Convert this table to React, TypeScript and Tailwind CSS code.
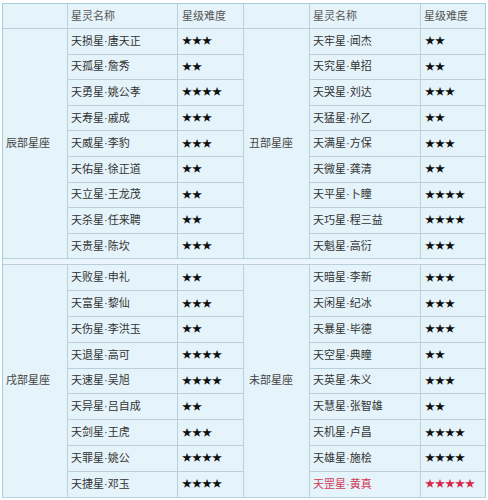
import React from "react";

type Row = { name: string; stars: number; hot?: boolean };
type Group = { zodiac: string; rows: Row[] };

const top: Group[] = [
  {
    zodiac: "辰部星座",
    rows: [
      { name: "天损星·唐天正", stars: 3 },
      { name: "天孤星·詹秀", stars: 2 },
      { name: "天勇星·姚公孝", stars: 4 },
      { name: "天寿星·戚成", stars: 3 },
      { name: "天威星·李豹", stars: 3 },
      { name: "天佑星·徐正道", stars: 2 },
      { name: "天立星·王龙茂", stars: 2 },
      { name: "天杀星·任来聘", stars: 2 },
      { name: "天贵星·陈坎", stars: 3 },
    ],
  },
  {
    zodiac: "丑部星座",
    rows: [
      { name: "天牢星·闻杰", stars: 2 },
      { name: "天究星·单招", stars: 2 },
      { name: "天哭星·刘达", stars: 3 },
      { name: "天猛星·孙乙", stars: 2 },
      { name: "天满星·方保", stars: 3 },
      { name: "天微星·龚清", stars: 2 },
      { name: "天平星·卜瞳", stars: 4 },
      { name: "天巧星·程三益", stars: 4 },
      { name: "天魁星·高衍", stars: 3 },
    ],
  },
];

const bottom: Group[] = [
  {
    zodiac: "戌部星座",
    rows: [
      { name: "天败星·申礼", stars: 2 },
      { name: "天富星·黎仙", stars: 3 },
      { name: "天伤星·李洪玉", stars: 2 },
      { name: "天退星·高可", stars: 4 },
      { name: "天速星·吴旭", stars: 4 },
      { name: "天异星·吕自成", stars: 2 },
      { name: "天剑星·王虎", stars: 3 },
      { name: "天罪星·姚公", stars: 4 },
      { name: "天捷星·邓玉", stars: 4 },
    ],
  },
  {
    zodiac: "未部星座",
    rows: [
      { name: "天暗星·李新", stars: 3 },
      { name: "天闲星·纪冰", stars: 3 },
      { name: "天暴星·毕德", stars: 3 },
      { name: "天空星·典瞳", stars: 2 },
      { name: "天英星·朱义", stars: 3 },
      { name: "天慧星·张智雄", stars: 2 },
      { name: "天机星·卢昌", stars: 4 },
      { name: "天雄星·施桧", stars: 4 },
      { name: "天罡星·黄真", stars: 5, hot: true },
    ],
  },
];

function HeaderHalf({ left }: { left: boolean }) {
  return (
    <div className="flex">
      <div className={left ? "w-[65px] border-r border-[#b9cfd9]" : "w-[66px] border-r border-[#b9cfd9]"} />
      <div className={left ? "w-[110px] border-r border-[#b9cfd9] pl-[3px] flex items-center text-[#555]" : "w-[111px] border-r border-[#b9cfd9] pl-[3px] flex items-center text-[#555]"}>
        星灵名称
      </div>
      <div className={left ? "w-[66px] border-r border-[#b9cfd9] pl-[4px] flex items-center text-[#555]" : "w-[64px] pl-[3px] flex items-center text-[#555]"}>
        星级难度
      </div>
    </div>
  );
}

function Half({ group, left, rowH }: { group: Group; left: boolean; rowH: string }) {
  return (
    <div className="flex">
      <div
        className={
          left
            ? "w-[65px] border-r border-b border-[#b9cfd9] pl-[3px] flex items-center text-[#444]"
            : "w-[66px] border-r border-b border-[#b9cfd9] pl-[5px] flex items-center text-[#444]"
        }
      >
        {group.zodiac}
      </div>
      <div className="flex flex-col">
        {group.rows.map((r) => (
          <div key={r.name} className={`flex border-b border-[#b9cfd9] ${rowH}`}>
            <div
              className={`${left ? "w-[110px]" : "w-[111px]"} border-r border-[#b9cfd9] pl-[3px] flex items-center ${
                r.hot ? "text-[#d23a55]" : "text-[#333]"
              }`}
            >
              {r.name}
            </div>
            <div
              className={`${left ? "w-[66px] border-r border-[#b9cfd9] pl-[4px]" : "w-[64px] pl-[4px]"} flex items-center text-[10px] ${
                r.hot ? "text-[#d8284a]" : "text-[#111]"
              }`}
            >
              {"★".repeat(r.stars)}
            </div>
          </div>
        ))}
      </div>
    </div>
  );
}

export default function App() {
  return (
    <div
      className="w-[488px] h-[500px] bg-white pt-[3px] pl-[2px] text-[11px] leading-none"
      style={{ fontFamily: '"Liberation Sans", "Noto Sans CJK SC", sans-serif' }}
    >
      <div className="w-[484px] border-l border-r border-t border-[#a2d2d8] bg-[#e5f3fa]">
        <div className="flex h-[25px] border-b border-[#b9cfd9]">
          <HeaderHalf left />
          <HeaderHalf left={false} />
        </div>
        <div className="flex">
          <Half group={top[0]} left rowH="h-[25.6px]" />
          <Half group={top[1]} left={false} rowH="h-[25.6px]" />
        </div>
        <div className="h-[6px] border-b border-[#b9cfd9] bg-[#eaf6fb]" />
        <div className="flex">
          <Half group={bottom[0]} left rowH="h-[25.8px]" />
          <Half group={bottom[1]} left={false} rowH="h-[25.8px]" />
        </div>
      </div>
    </div>
  );
}
